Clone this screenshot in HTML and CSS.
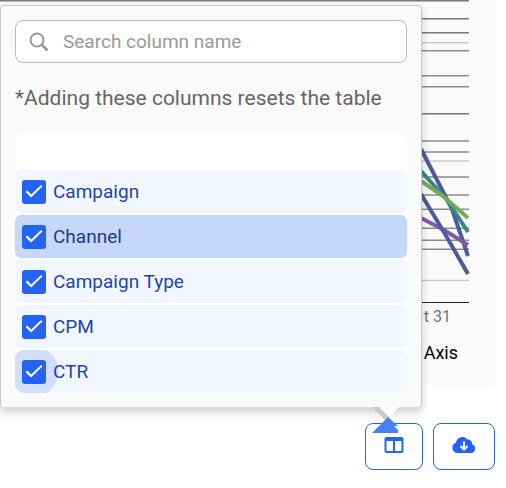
FILE: index.html
```html
<!DOCTYPE html>
<html lang="en">
<head>
<meta charset="utf-8">
<title>Column selector</title>
<link rel="stylesheet" href="styles.css">
</head>
<body>
<main class="page">
  <section class="chart">
    <svg class="plot" width="60" height="304" viewBox="0 0 60 304" aria-hidden="true">
      <g fill="none" stroke-width="1.5">
        <path stroke="#777" d="M-2000 .8H60M0 18.7H60M0 32.7H60M0 113.8H60"/>
        <path stroke="#8c8c8c" d="M0 50.7H60M0 75.7H60M0 86.7H60M0 141H60M0 152H60M0 177H60M0 195H60M0 209.2H60M0 228.2H60M0 240.2H60M0 249.2H60"/>
        <path stroke="#ccc" d="M0 42.7H60M0 161H60M0 280.4H60"/>
      </g>
      <path stroke="#222" d="M0 302.500H60"/>
      <g fill="none" stroke-width="4">
        <path stroke="#4c5a9e" d="M12 149 43 209 59 256"/>
        <path stroke="#35878a" d="M12 171 38 200 59 232"/>
        <path stroke="#825aa5" d="M12 218 35 230 59 245"/>
        <path stroke="#4c5a9e" d="M12 194 36 234 59 274"/>
        <path stroke="#74a957" d="M12 181 34 196 59 218"/>
      </g>
    </svg>
    <div class="tick">t 31</div>
    <div class="axis">Axis</div>
  </section>

  <div class="actions">
    <button class="action" type="button" aria-label="Columns">
      <svg width="20" height="18" viewBox="0 0 20 18"><path fill="#2563f4" fill-rule="evenodd" d="M2.500 1h15A2 2 0 0 1 19.500 3v12a2 2 0 0 1-2 2h-15a2 2 0 0 1-2-2V3a2 2 0 0 1 2-2ZM2.500 5v10H9V5ZM11 5v10h6.500V5Z"/></svg>
    </button>
    <button class="action action-wide" type="button" aria-label="Download">
      <svg width="24" height="18" viewBox="0 0 24 18"><path fill="#2563f4" d="M5.500 17A5.300 5.300 0 0 1 4 6.700 6.500 6.500 0 0 1 15.500 3.500 4 4 0 0 1 20 8.200 4.500 4.500 0 0 1 19 17Z"/><path fill="none" stroke="#fff" stroke-width="2" d="M12 5.500v8M8.500 10l3.500 3.500 3.500-3.500"/></svg>
    </button>
  </div>

  <div class="popup">
    <label class="search">
      <svg width="20" height="20" viewBox="0 0 20 20" fill="none" stroke="#999"><circle cx="8" cy="8" r="6.500" stroke-width="2"/><path stroke-width="2.500" d="m12.500 12.500 6 6"/></svg>
      <input type="text" placeholder="Search column name" aria-label="Search column name">
    </label>
    <p class="note">*Adding these columns resets the table</p>
    <div class="options">
      <label class="option"><input type="checkbox" checked>Campaign</label>
      <label class="option selected"><input type="checkbox" checked>Channel</label>
      <label class="option"><input type="checkbox" checked>Campaign Type</label>
      <label class="option"><input type="checkbox" checked>CPM</label>
      <label class="option focused"><input type="checkbox" checked>CTR</label>
    </div>
    <svg class="pointer" width="30" height="28" viewBox="0 0 30 28" aria-hidden="true">
      <path fill="#c8c8c8" d="M1 0h9l9 10-4 4Z"/>
      <path fill="#fff" d="M8 0h20L18 10Z"/>
      <path fill="#4583f5" d="m17 10 10 9h-4l4 4v3H1Z"/>
    </svg>
  </div>
</main>
</body>
</html>
```
FILE: styles.css
```css
* {
  box-sizing: border-box;
}

body {
  margin: 0;
  background: #fff;
  font-family: Roboto, sans-serif;
  font-size: 18px;
}

.page {
  position: relative;
  padding-right: 11px;
}

.chart {
  display: flex;
  flex-direction: column;
  align-items: flex-end;
  padding: 0 26px 20px 0;
  overflow: hidden;
  background: #fafafa;
}

.plot {
  display: block;
  overflow: visible;
}

.tick {
  margin-right: 18px;
  color: #6b7780;
  font-size: 16px;
  line-height: 26px;
}

.axis {
  margin: 10px 11px 0 0;
  color: #000;
  line-height: 25px;
}

.actions {
  display: flex;
  justify-content: flex-end;
  gap: 10px;
  padding-top: 38px;
}

.action {
  display: flex;
  align-items: center;
  justify-content: center;
  width: 58px;
  height: 47px;
  padding: 0 0 3px;
  border: 1px solid #2563eb;
  border-radius: 8px;
  background: #fff;
}

.action-wide {
  width: 62px;
}

.popup {
  position: absolute;
  top: 5px;
  left: 0;
  right: 84px;
  padding: 14px;
  border: 1px solid #ccc;
  border-radius: 4px;
  border-bottom-color: #ddd;
  background: #fafafa;
  box-shadow: 0 4px 8px rgba(0, 0, 0, 0.2);
}

.search {
  display: flex;
  align-items: center;
  gap: 14px;
  height: 43px;
  padding: 0 13px;
  border: 1px solid #bbb;
  border-radius: 8px;
  background: #fff;
  font-size: 19px;
}

.search input {
  flex: 1;
  min-width: 0;
  padding: 0;
  border: 0;
  outline: 0;
  background: transparent;
  font: inherit;
}

.search input::placeholder {
  color: #999;
  opacity: 1;
}

.note {
  margin: 20px 0;
  color: #666;
  font-size: 21px;
  line-height: 30px;
}

.options {
  display: flex;
  flex-direction: column;
  gap: 2px;
  padding-top: 37px;
  border-radius: 8px;
  background: #fff;
  font-size: 19px;
}

.option {
  display: flex;
  align-items: center;
  gap: 7px;
  height: 43px;
  padding: 0 7px;
  border-radius: 6px;
  background: #f2f7ff;
  color: #1e44ad;
}

.option.selected {
  background: #c6d8fa;
  color: #1e3a8a;
}

.option.focused {
  background: radial-gradient(circle at 19px 50%, #d2dffb 24px, #f2f7ff 25px);
}

.option input {
  appearance: none;
  display: grid;
  place-items: center;
  width: 24px;
  height: 24px;
  margin: 0;
  border-radius: 3px;
  background: #2563f4;
}

.option input::before {
  content: "";
  width: 17px;
  height: 13px;
  background: #fff;
  clip-path: polygon(0 54%, 11% 42%, 33% 73%, 92% 0, 100% 9%, 33% 96%);
}

.pointer {
  position: absolute;
  top: 100%;
  right: 20px;
}
```
